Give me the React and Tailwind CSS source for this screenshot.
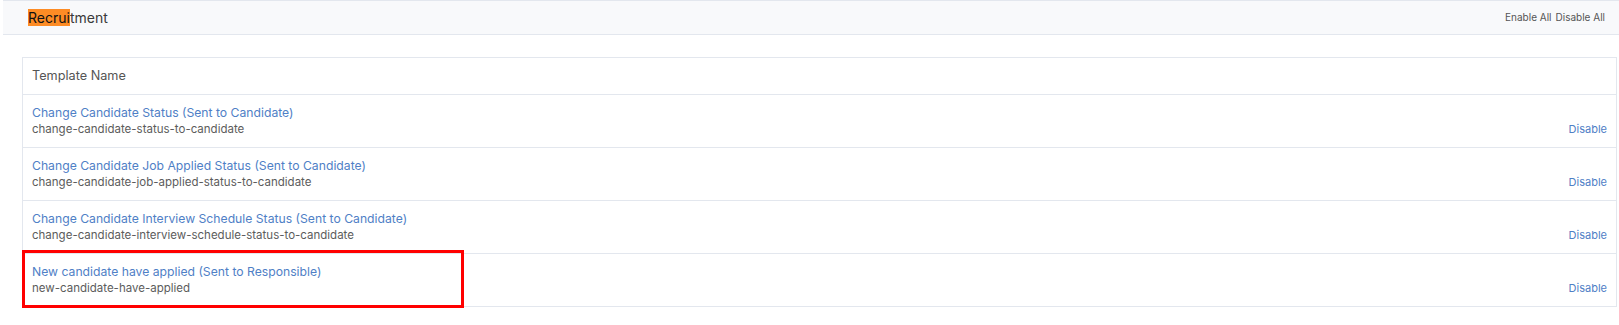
const templates = [
    { name: 'Change Candidate Status (Sent to Candidate)', slug: 'change-candidate-status-to-candidate' },
    { name: 'Change Candidate Job Applied Status (Sent to Candidate)', slug: 'change-candidate-job-applied-status-to-candidate' },
    { name: 'Change Candidate Interview Schedule Status (Sent to Candidate)', slug: 'change-candidate-interview-schedule-status-to-candidate' },
    { name: 'New candidate have applied (Sent to Responsible)', slug: 'new-candidate-have-applied', marked: true },
]

export default function App() {
    return (
        <div className="w-full min-h-[325px] bg-white font-['Inter','Liberation_Sans',sans-serif] text-[#333]">
            {/* Section header */}
            <div className="ml-[3px] h-[35px] flex items-center justify-between border-y border-[#e3e7ee] bg-[#f8f9fb] pl-[25px] pr-[14px]">
                <h2 className="text-[14px] leading-[17px] text-[#3a3a3a]">
                    <span className="bg-[#fd8c25] text-[#111]">Recrui</span>tment
                </h2>
                <div className="flex gap-[4px] text-[10px] text-[#555]">
                    <a href="#">Enable All</a>
                    <a href="#">Disable All</a>
                </div>
            </div>

            {/* Templates table */}
            <div className="mt-[22px] ml-[22px] mr-[2px] border border-[#e3e7ee]">
                <div className="h-[37px] flex items-center px-[9px] border-b border-[#e3e7ee] text-[12.7px] text-[#555]">
                    Template Name
                </div>
                {templates.map((t, i) => (
                    <div key={i} className="relative flex items-end justify-between px-[9px] py-[9px] border-b last:border-b-0 border-[#e3e7ee]">
                        <div>
                            <a href="#" className="block text-[12.2px] leading-[17px] text-[#4f80c6]">{t.name}</a>
                            <div className="text-[11.5px] leading-[17px] text-[#5c5c5c]">{t.slug}</div>
                        </div>
                        <a href="#" className="text-[11px] leading-[17px] text-[#4f80c6]">Disable</a>

                        {/* Annotation box */}
                        {t.marked && (
                            <div className="absolute -left-[1px] -top-[4px] w-[442px] h-[58px] border-[3px] border-[#ff0000] pointer-events-none" />
                        )}
                    </div>
                ))}
            </div>
        </div>
    )
}
